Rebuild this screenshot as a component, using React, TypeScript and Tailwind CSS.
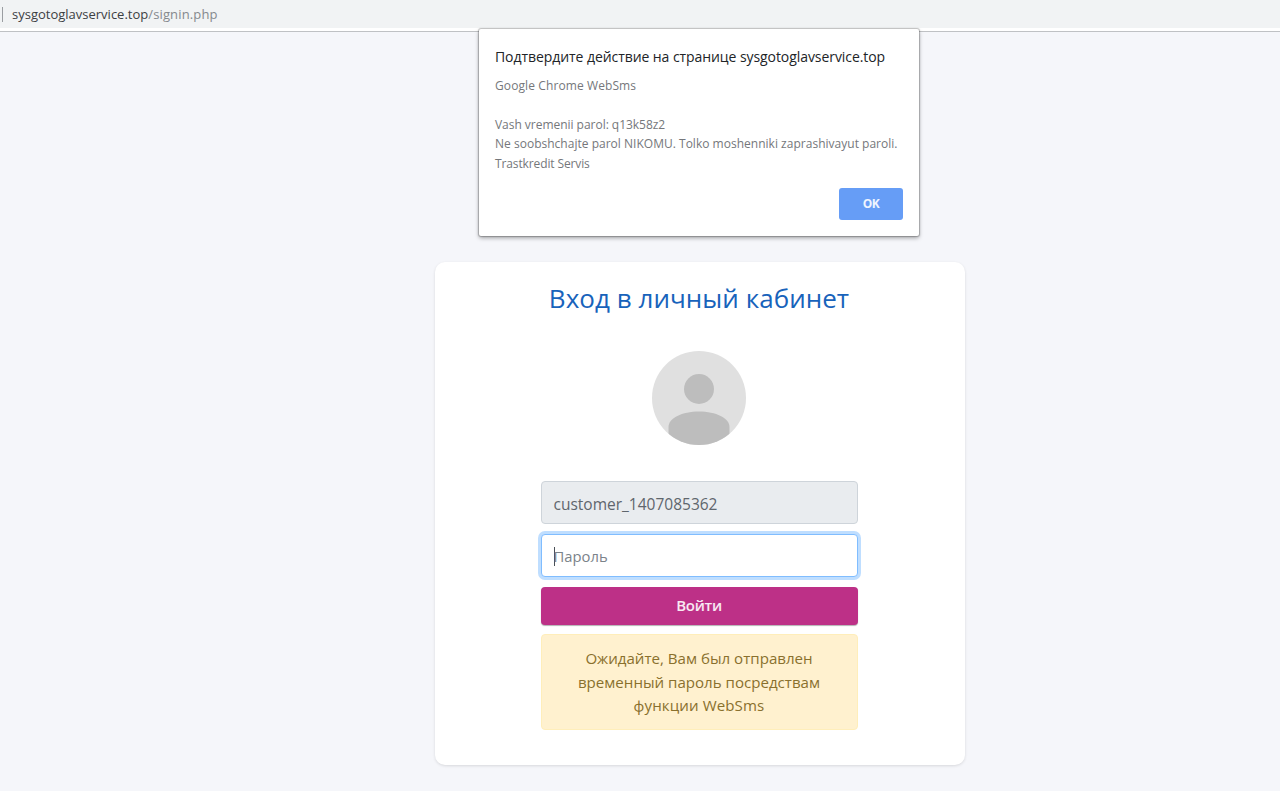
import React from 'react';

function AddressBar() {
  return (
    <header className="h-8 shrink-0 border-b border-[#bfc1c4] bg-white">
      <div className="flex h-7 items-center bg-[#f1f3f4]">
        <span className="h-[15px] w-px ml-0.5 bg-[#9a9da1]" />
        <span className="ml-[9px] whitespace-nowrap text-[13px] leading-7 text-[#3c4043]">
          sysgotoglavservice.top<span className="tracking-[0.14px] text-[#85898d]">/signin.php</span>
        </span>
      </div>
    </header>
  );
}

function AlertDialog() {
  return (
    <div
      role="alertdialog"
      className="absolute left-[479px] top-[29px] flex h-[207px] w-[440px] flex-col rounded-[2px] bg-white pl-4 pr-4 pt-[17px] shadow-[0_0_1px_1px_rgba(0,0,0,0.22),0_2px_4px_rgba(0,0,0,0.35)]"
    >
      <h2 className="whitespace-nowrap text-[14px] leading-[21px] tracking-[-0.07px] text-[#212427]">
        Подтвердите действие на странице sysgotoglavservice.top
      </h2>
      <p className="mt-[8.500px] whitespace-pre text-[12px] leading-[19.500px] text-[#75777b]">
        <span className="tracking-[0.1px]">Google Chrome WebSms</span>
        {'\n\n'}
        <span className="tracking-[-0.03px]">Vash vremenii parol: q13k58z2</span>
        {'\n'}
        <span className="tracking-[0.015px]">Ne soobshchajte parol NIKOMU. Tolko moshenniki zaprashivayut paroli.</span>
        {'\n'}
        <span className="tracking-[-0.12px]">Trastkredit Servis</span>
      </p>
      <button
        type="button"
        className="mb-4 mt-auto h-8 w-16 self-end rounded-[3px] bg-[#669df6] text-[12px] font-bold tracking-[-0.5px] text-white/90"
      >
        OK
      </button>
    </div>
  );
}

function Avatar() {
  return (
    <svg width="94" height="94" viewBox="0 0 94 94" className="mt-[35px]">
      <defs>
        <clipPath id="avatar-disc">
          <circle cx="47" cy="47" r="47" />
        </clipPath>
      </defs>
      <circle cx="47" cy="47" r="47" fill="#e0e0e0" />
      <g clipPath="url(#avatar-disc)" fill="#bdbdbd">
        <circle cx="47" cy="38" r="15" />
        <path d="M16.500 94V76C16.500 67 30 60.500 47 60.500S77.500 67 77.500 76V94Z" />
      </g>
    </svg>
  );
}

export default function App() {
  return (
    <div className="relative flex h-[791px] w-full flex-col overflow-hidden bg-[#f5f6fa] font-['Open_Sans','Noto_Sans',sans-serif]">
      <AddressBar />
      <main className="ml-[435px] mt-[230px] flex h-[503px] w-[530px] flex-col items-center rounded-[10px] bg-white pr-0.5 shadow-[0_1px_3px_rgba(0,0,0,0.12)]">
        <h1 className="mt-[19px] whitespace-nowrap text-[26px] leading-[35px] tracking-[0.04px] text-[#1863bb]">
          Вход в личный кабинет
        </h1>
        <Avatar />
        <form className="mt-9 flex w-[317px] flex-col" onSubmit={(e) => e.preventDefault()}>
          <div className="flex h-[43px] items-center rounded-[4px] border border-[#ced4da] bg-[#e9ecef] px-3 pt-1 text-[15.5px] text-[#5f666d]">
            customer_1407085362
          </div>
          <div className="mt-[10px] flex h-[43px] items-center rounded-[4px] border border-[#80bdff] bg-white px-3 pt-0.5 text-[14.8px] text-[#7b838a] shadow-[0_0_0_3px_#bfdeff]">
            <span className="-mr-px mb-px h-[19px] w-px bg-[#495057]" />
            Пароль
          </div>
          <button
            type="button"
            className="mt-[10px] h-[38px] rounded-[4px] bg-[#bd3087] pb-0.5 text-[15px] font-semibold tracking-[-0.3px] text-white/90 shadow-[0_1px_1px_rgba(0,0,0,0.3)]"
          >
            Войти
          </button>
          <div className="mt-[9px] flex h-24 flex-col items-center justify-center rounded-[4px] border border-[#ffeeba] bg-[#fff1cf] pt-px text-[15.1px] leading-[23.600px] text-[#89702d]">
            <span>Ожидайте, Вам был отправлен</span>
            <span>временный пароль посредствам</span>
            <span className="tracking-[0.1px]">функции WebSms</span>
          </div>
        </form>
      </main>
      <AlertDialog />
    </div>
  );
}
